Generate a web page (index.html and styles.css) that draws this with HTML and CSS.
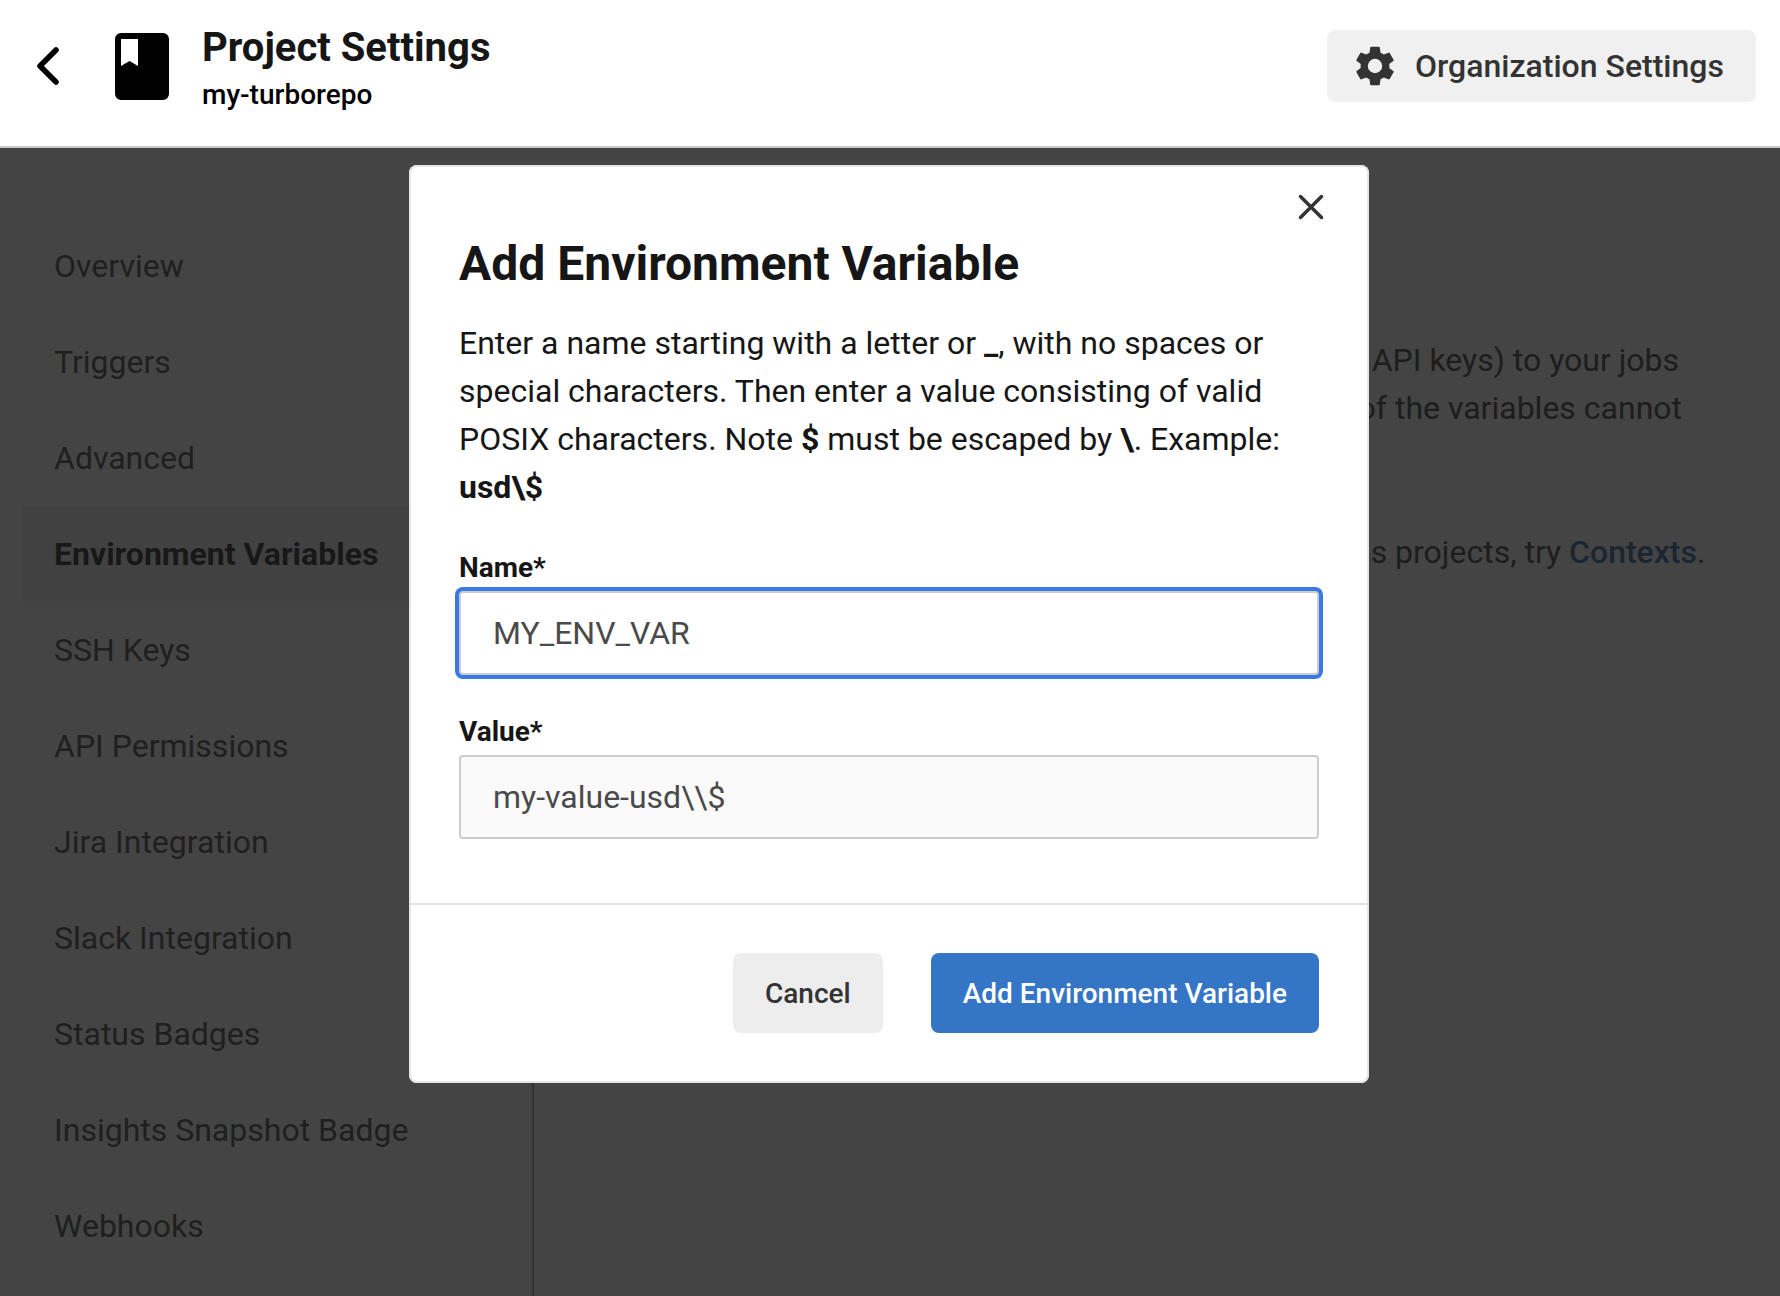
FILE: index.html
```html
<!DOCTYPE html>
<html lang="en">
<head>
    <meta charset="UTF-8">
    <meta name="viewport" content="width=device-width, initial-scale=1.0">
    <title>Project Settings</title>
    <link rel="stylesheet" href="styles.css">
</head>
<body>

    <header class="topbar">
        <svg class="back-icon" width="24" height="38" viewBox="0 0 24 38"><path d="M20 3 L4 19 L20 35" fill="none" stroke="#000" stroke-width="5.500" stroke-linecap="round" stroke-linejoin="round"/></svg>
        <svg class="project-icon" width="54" height="67" viewBox="0 0 54 67"><path fill-rule="evenodd" d="M6 0H48a6 6 0 0 1 6 6V61a6 6 0 0 1-6 6H6a6 6 0 0 1-6-6V6a6 6 0 0 1 6-6ZM6 6V33L14.500 28L23 33V6Z" fill="#000"/></svg>
        <div class="project-title">
            <h1>Project Settings</h1>
            <p>my-turborepo</p>
        </div>
        <a class="org-button">
            <svg width="48" height="48" viewBox="0 0 24 24"><path fill="#333" d="M19.140 12.940c.040-.300.060-.610.060-.940s-.020-.640-.070-.940l2.030-1.580a.49.490 0 0 0 .120-.610l-1.920-3.320a.49.490 0 0 0-.590-.220l-2.390.960c-.500-.380-1.030-.700-1.620-.940l-.360-2.540a.48.480 0 0 0-.480-.410h-3.840a.47.470 0 0 0-.470.410l-.360 2.540c-.590.240-1.130.570-1.620.940l-2.390-.960a.48.480 0 0 0-.590.220L2.740 8.870a.48.480 0 0 0 .120.610l2.030 1.580c-.050.300-.090.630-.090.940s.020.640.070.940l-2.030 1.580a.49.490 0 0 0-.120.610l1.920 3.320c.120.220.370.290.590.220l2.390-.960c.500.380 1.030.700 1.620.940l.360 2.540c.050.240.240.410.480.410h3.840c.240 0 .440-.170.470-.410l.360-2.540c.590-.240 1.130-.560 1.620-.940l2.390.960c.220.080.470 0 .590-.220l1.920-3.320a.47.470 0 0 0-.120-.610l-2.010-1.580ZM12 15.600A3.600 3.600 0 1 1 12 8.400a3.600 3.600 0 0 1 0 7.200Z"/></svg>
            <span>Organization Settings</span>
        </a>
    </header>

    <div class="page">
        <nav class="sidebar">
            <a>Overview</a>
            <a>Triggers</a>
            <a>Advanced</a>
            <a class="active">Environment Variables</a>
            <a>SSH Keys</a>
            <a>API Permissions</a>
            <a>Jira Integration</a>
            <a>Slack Integration</a>
            <a>Status Badges</a>
            <a>Insights Snapshot Badge</a>
            <a>Webhooks</a>
        </nav>
        <main class="content">
            <p>You can add environment variables to send data (like API keys) to your jobs<br>
            instead of storing them in the repository. The values of the variables cannot<br>
            be read or edited in the app once they are set.</p>
            <p>If you're looking to share environment variables across projects, try <a class="link">Contexts</a>.</p>
        </main>

        <div class="overlay"></div>

        <div class="modal">
            <svg class="close-icon" width="26" height="26" viewBox="0 0 26 26"><path d="M2.500 2.500 L23.500 23.500 M23.500 2.500 L2.500 23.500" stroke="#333" stroke-width="3.500" stroke-linecap="round"/></svg>
            <div class="modal-body">
                <h2>Add Environment Variable</h2>
                <p class="help">Enter a name starting with a letter or <b>_</b>, with no spaces or special characters. Then enter a value consisting of valid POSIX characters. Note <b>$</b> must be escaped by <b>\</b>. Example: <b>usd\$</b></p>
                <label>Name*</label>
                <input class="field focused" value="MY_ENV_VAR">
                <label>Value*</label>
                <input class="field" value="my-value-usd\\$">
            </div>
            <div class="modal-footer">
                <button class="btn-cancel">Cancel</button>
                <button class="btn-add">Add Environment Variable</button>
            </div>
        </div>
    </div>

</body>
</html>
```

FILE: styles.css
```css
* {
    box-sizing: border-box;
}
html, body {
    height: 100%;
}
body {
    margin: 0;
    height: 1296px;
    overflow: hidden;
    font-family: Roboto, "Liberation Sans", sans-serif;
    color: #161616;
    background: #fff;
    display: flex;
    flex-direction: column;
}

/* top bar */
.topbar {
    height: 148px;
    flex: none;
    display: flex;
    align-items: center;
    padding: 0 24px 14px 36px;
    background: #fff;
    border-bottom: 2px solid #c9c9c9;
}
.back-icon {
    margin-right: 55px;
}
.project-icon {
    margin-right: 33px;
}
.project-title {
    margin-top: 4px;
}
.project-title h1 {
    margin: 0;
    font-size: 40px;
    line-height: 48px;
    font-weight: 700;
}
.project-title p {
    margin: 5px 0 0;
    font-size: 28px;
    line-height: 36px;
    font-weight: 500;
    color: #000;
}
.org-button {
    margin-left: auto;
    width: 429px;
    height: 72px;
    display: flex;
    align-items: center;
    gap: 16px;
    padding-left: 24px;
    background: #f0f0f0;
    border-radius: 8px;
    color: #333;
    font-size: 32px;
    font-weight: 500;
}

/* page under the dialog */
.page {
    flex: 1;
    position: relative;
    display: flex;
    min-height: 0;
}
.sidebar {
    width: 534px;
    flex: none;
    margin-top: 30px;
    padding: 40px 0 0 22px;
    border-right: 2px solid #a0a0a0;
}
.sidebar a {
    display: flex;
    align-items: center;
    height: 96px;
    padding-left: 32px;
    font-size: 32px;
    color: #3c3c3c;
}
.sidebar a.active {
    font-weight: 700;
    color: #161616;
    background: #ededed;
}
.content {
    flex: 1;
    padding: 188px 0 0 81px;
    font-size: 32px;
    line-height: 48px;
    color: #333;
    white-space: nowrap;
    overflow: hidden;
}
.content p {
    margin: 0 0 48px;
}
.link {
    color: #2a5f9e;
    font-weight: 500;
}
.overlay {
    position: absolute;
    inset: 0;
    background: rgba(25, 25, 25, 0.81);
}

/* dialog */
.modal {
    position: absolute;
    left: 409px;
    top: 17px;
    width: 960px;
    height: 918px;
    background: #fff;
    border-radius: 8px;
    box-shadow: 0 0 0 2px #e6e6e6 inset;
    display: flex;
    flex-direction: column;
}
.close-icon {
    position: absolute;
    top: 29px;
    right: 45px;
}
.modal-body {
    padding: 69px 50px 0;
    flex: 1;
    border-bottom: 2px solid #e3e3e3;
}
.modal-body h2 {
    margin: 0 0 25px;
    font-size: 48px;
    line-height: 60px;
    font-weight: 700;
}
.help {
    margin: 0 0 39px;
    font-size: 32px;
    line-height: 48px;
    color: #161616;
}
.modal-body label {
    display: block;
    font-size: 28px;
    line-height: 36px;
    font-weight: 700;
}
.field {
    display: block;
    width: 860px;
    height: 84px;
    margin: 5px 0 39px;
    padding: 0 32px;
    font-family: inherit;
    font-size: 32px;
    color: #4a4a4a;
    background: #fafafa;
    border: 2px solid #ccc;
    border-radius: 4px;
    outline: none;
}
.field.focused {
    background: #fff;
    box-shadow: 0 0 0 4px #3b78e7;
}
.modal-footer {
    height: 178px;
    flex: none;
    display: flex;
    justify-content: flex-end;
    align-items: flex-start;
    gap: 48px;
    padding: 48px 50px 0 0;
}
.modal-footer button {
    height: 80px;
    border: none;
    border-radius: 8px;
    padding: 0 32px;
    font-family: inherit;
    font-size: 28px;
    font-weight: 500;
}
.btn-cancel {
    background: #ededed;
    color: #333;
}
.btn-add {
    background: #3575c6;
    color: #fff;
}
```
